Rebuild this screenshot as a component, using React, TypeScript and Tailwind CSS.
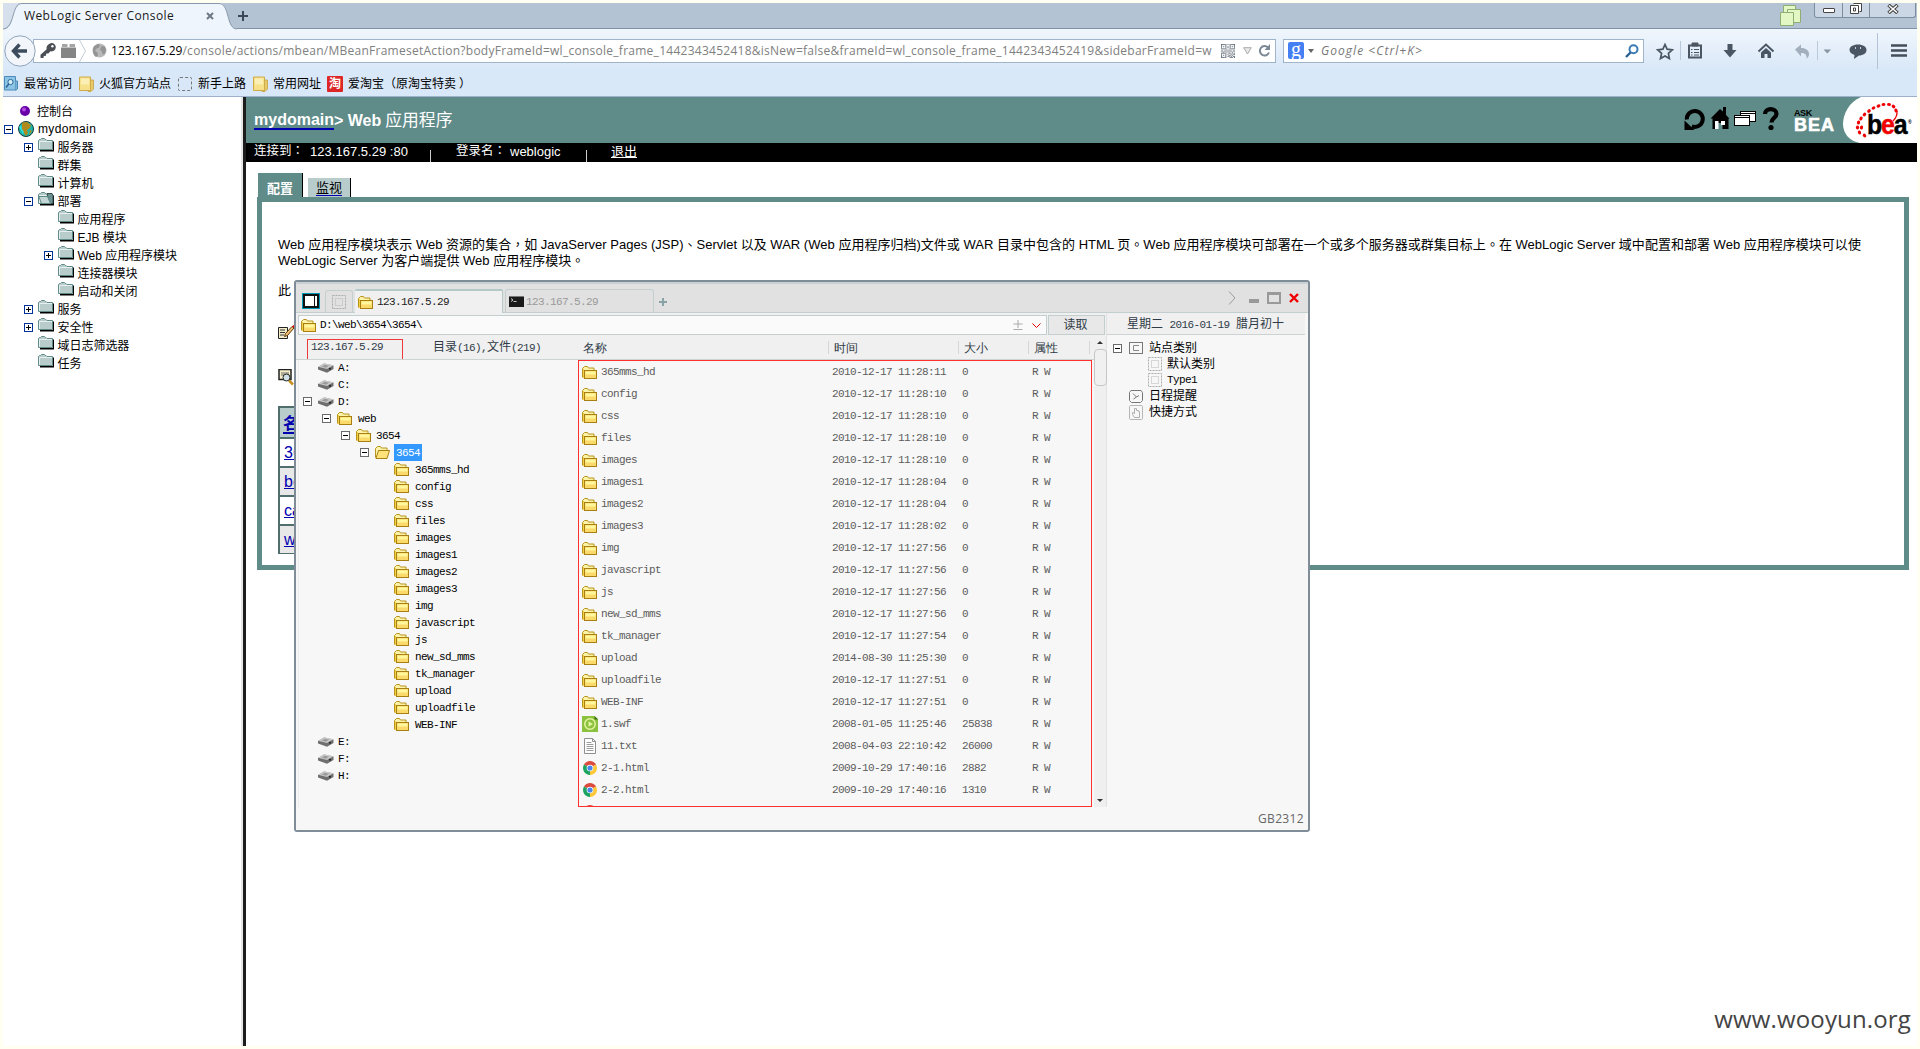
import React from "react";

const SONG = "font-['Liberation_Mono','Noto_Sans_CJK_SC',monospace]";

/* ---------- browser icons ---------- */

function BackIcon() {
  return (
    <svg width="32" height="32" viewBox="0 0 32 32" className="relative z-10 -mr-[3px] shrink-0">
      <circle cx="16" cy="16" r="15.2" fill="#f2f6fb" stroke="#8fa3bb" />
      <path d="M15.5 9.5 9.5 16l6 6.5M10 16h13" fill="none" stroke="#3d4c5c" strokeWidth="3.4" />
    </svg>
  );
}

function KeyIcon() {
  return (
    <svg width="17" height="17" viewBox="0 0 17 17" className="shrink-0">
      <path d="M10.6 1.2c2-1 5.2.8 5.2 3.8 0 3-2.600 5-5.400 4.300L8.300 11.500 6.200 11.600 6 13.700 3.800 13.900 3.500 16H.5v-3.200l6.200-5.600C6 4.600 8 2 10.600 1.200z" fill="#4b4f55" />
      <circle cx="12.400" cy="4.300" r="1.200" fill="#fff" />
    </svg>
  );
}

function BrickIcon() {
  return (
    <svg width="15" height="14" viewBox="0 0 15 14" className="shrink-0">
      <path d="M1 0h5.500v3H1zM8.500 0H14v3H8.500z" fill="#a5a5a5" />
      <path d="M0 3.500h15V14H0z" fill="#858585" />
    </svg>
  );
}

function GreyGlobe() {
  return (
    <svg width="15" height="15" viewBox="0 0 15 15" className="shrink-0">
      <circle cx="7.500" cy="7.500" r="7" fill="#b9b9b9" />
      <path d="M2 3.500 6 1l2 1-1 2.500-3 1.500-1 2 2.500 1.500.5 3-2 1.500C1 12 0 7 2 3.500zM9.500 3l3 .5 1.500 3-1 4-2.500 1-.5-3-2-1.500z" fill="#949494" />
    </svg>
  );
}

const QR = [
  "1111101011111",
  "1000100010001",
  "1010101010101",
  "1000101010001",
  "1111100011111",
  "0000010100000",
  "1101101011011",
  "0010010100100",
  "1111100110101",
  "1000101001011",
  "1010100110100",
  "1000101101011",
  "1111100011101",
];

function QrIcon() {
  return (
    <svg width="14" height="14" viewBox="0 0 13 13" className="shrink-0">
      {QR.map((row, y) =>
        row.split("").map((c, x) => (c === "1" ? <rect key={`${x}-${y}`} x={x} y={y} width="1" height="1" fill="#6d7681" /> : null)),
      )}
    </svg>
  );
}

function BookmarkFolder() {
  return (
    <svg width="15" height="16" viewBox="0 0 15 16" className="shrink-0">
      <path d="M9 4h5.500v9L12 15.500H9z" fill="#e8c968" stroke="#c9a040" strokeWidth=".8" />
      <path d="M.5 1h11v13.500H.5z" fill="#f6e08a" stroke="#cfaa48" />
      <path d="M2 2.500h8v6H2z" fill="#fbefb5" />
    </svg>
  );
}

/* ---------- WebLogic tree ---------- */

/* Punctuation centred in its full-width cell */
function Mark({ children }: { children: string }) {
  return <span className="font-['Noto_Sans_CJK_TC',sans-serif] leading-none" lang="zh-Hant">{children}</span>;
}

function WlFolder({ open = false }: { open?: boolean }) {
  return (
    <svg width="16" height="14" viewBox="0 0 16 14" className="shrink-0">
      <path d="M2 13.500h14V4l-1-1v9H2z" fill="#000" />
      <path d="M.5 11.500v-9l1-1h1l1-1h3l1 1H8l1 1h5.500v9z" fill="#b8cccc" stroke="#5f8b89" />
      <path d="M1.500 11V3.500H14" fill="none" stroke="#e6f0f0" />
      {open && (
        <>
          <path d="M9 1.500h5l1 2v8h-4z" fill="#6c9190" stroke="#33504e" />
          <path d="M3.500 11.500.8 4.500h8.700l3 7z" fill="#c4d5d5" stroke="#5f8b89" />
        </>
      )}
    </svg>
  );
}

function Box({ plus = false, grey = false }: { plus?: boolean; grey?: boolean }) {
  return (
    <svg width="9" height="9" viewBox="0 0 9 9" className="shrink-0">
      <rect x=".5" y=".5" width="8" height="8" fill="#fff" stroke={grey ? "#6a6a6a" : "#003399"} />
      <path d="M2 4.500h5" stroke="#000" />
      {plus && <path d="M4.500 2v5" stroke="#000" />}
    </svg>
  );
}

type Node = { label: React.ReactNode; depth: number; box?: "plus" | "minus"; open?: boolean };

const NAV: Node[] = [
  { label: "服务器", depth: 1, box: "plus" },
  { label: "群集", depth: 1 },
  { label: "计算机", depth: 1 },
  { label: "部署", depth: 1, box: "minus", open: true },
  { label: "应用程序", depth: 2 },
  { label: "EJB 模块", depth: 2 },
  { label: "Web 应用程序模块", depth: 2, box: "plus" },
  { label: "连接器模块", depth: 2 },
  { label: "启动和关闭", depth: 2 },
  { label: "服务", depth: 1, box: "plus" },
  { label: "安全性", depth: 1, box: "plus" },
  { label: "域日志筛选器", depth: 1 },
  { label: "任务", depth: 1 },
];

function Sidebar() {
  return (
    <nav className="w-[238px] shrink-0 bg-white pt-[5px] text-[12px] text-black">
      <div className="flex h-[18px] items-center pl-[17px]">
        <svg width="10" height="10" viewBox="0 0 10 10">
          <circle cx="5" cy="5" r="5" fill="#6a00a8" />
          <circle cx="4" cy="3.500" r="2" fill="#b04be0" />
        </svg>
        <span className="pl-[7px] pt-px">控制台</span>
      </div>
      <div className="flex h-[18px] items-center pl-px">
        <Box />
        <svg width="16" height="16" viewBox="0 0 16 16" className="ml-[5px]">
          <circle cx="8" cy="8" r="7.500" fill="#1fb5a8" stroke="#0c3b38" />
          <path d="M4 1.500 9 1l4 3-1 3-3 2 1 3-2 3-2-3-3-3 1-3z" fill="#b08a1c" />
          <path d="M1 6l2-2 1 4 2 3-1 2z" fill="#2ce0e0" />
          <path d="M12 9l2 1-3 4z" fill="#b08a1c" />
        </svg>
        <span className="pl-[4px] tracking-[0.35px]">mydomain</span>
      </div>
      {NAV.map((n, i) => (
        <div key={i} className={`flex h-[18px] items-center ${n.depth === 1 ? "pl-[21px]" : "pl-[41px]"}`}>
          <span className="flex w-[14px] items-center">{n.box && <Box plus={n.box === "plus"} />}</span>
          <span className="-mt-[4px] flex">
            <WlFolder open={n.open} />
          </span>
          <span className="whitespace-nowrap pl-[3.500px] pt-[2px] tracking-[-0.03px]">{n.label}</span>
        </div>
      ))}
    </nav>
  );
}

/* ---------- file manager icons ---------- */

function Folder({ open = false }: { open?: boolean }) {
  return (
    <svg width="15" height="13" viewBox="0 0 15 13" className="shrink-0">
      <path d="M.5 11.500V2.500L2.500.5h3l1 1.500h5.500v3" fill="#fdf3a8" stroke="#b8941c" />
      {open ? (
        <path d="M1 12.200 3.500 4.500h11L12 12.500H1z" fill="#ffe37a" stroke="#a87f12" />
      ) : (
        <>
          <path d="M1 3h1v9H1z" fill="#f3cf45" />
          <rect x="2.500" y="4.500" width="12" height="8" fill="#fbd96a" stroke="#a87f12" />
          <path d="M3.500 5.500h10v3h-10z" fill="#fff79c" />
        </>
      )}
    </svg>
  );
}

function Drive() {
  return (
    <svg width="16" height="10" viewBox="0 0 16 10" className="shrink-0">
      <path d="M0 4 6 .5 15.500 2.500V6L9 9.800 0 6.500z" fill="#6f6f6f" />
      <path d="M0 3.700 6.200.3l9.300 2L9 6z" fill="#c9c9c9" />
      <path d="M3.500 3.500 7 1.800l4 1L8 4.700z" fill="#9b9b9b" />
      <circle cx="12" cy="5.700" r="1" fill="#222" />
    </svg>
  );
}

function Swf() {
  return (
    <svg width="16" height="16" viewBox="0 0 16 16" className="shrink-0">
      <path d="M0 0h12.500L16 3v13H0z" fill="#8cc13f" />
      <path d="M12.500 0 16 3.500h-3.500z" fill="#3c6d12" />
      <circle cx="8" cy="8" r="5.200" fill="none" stroke="#e4f5a0" strokeWidth="1.500" />
      <path d="M6.500 5.200 11 8l-4.500 2.800z" fill="#e4f5a0" />
    </svg>
  );
}

function Txt() {
  return (
    <svg width="12" height="16" viewBox="0 0 12 16" className="mx-[2px] shrink-0">
      <path d="M.5.5h8l3 3v12H.5z" fill="#fff" stroke="#8f8f8f" />
      <path d="M8.500.5v3h3" fill="none" stroke="#8f8f8f" />
      <path d="M2.500 4.500h5M2.500 6.500h7M2.500 8.500h7M2.500 10.500h7M2.500 12.500h7" stroke="#9b9b9b" />
    </svg>
  );
}

function Chrome() {
  return (
    <svg width="14" height="14" viewBox="0 0 14 14" className="mx-px shrink-0">
      <path d="M7 7 .94 3.500A7 7 0 0 1 13.060 3.500z" fill="#dd4b3e" />
      <path d="M7 7 .94 3.500A7 7 0 0 0 7 14z" fill="#1da462" />
      <path d="M7 7 13.060 3.500A7 7 0 0 1 7 14z" fill="#fdc93b" />
      <circle cx="7" cy="7" r="3.300" fill="#fff" />
      <circle cx="7" cy="7" r="2.600" fill="#4a86ee" />
    </svg>
  );
}

function DottedBox() {
  return (
    <svg width="14" height="14" viewBox="0 0 14 14" className="shrink-0" fill="none" stroke="#acacac">
      <rect x=".5" y=".5" width="13" height="13" strokeDasharray="2 1" />
      <rect x="3.500" y="3.500" width="7" height="7" stroke="#b4b4b4" strokeDasharray="1 1" />
    </svg>
  );
}

/* ---------- file manager data ---------- */

const DIRS = ["365mms_hd", "config", "css", "files", "images", "images1", "images2", "images3", "img", "javascript", "js", "new_sd_mms", "tk_manager", "upload", "uploadfile", "WEB-INF"];

const TIMES = ["28:11", "28:10", "28:10", "28:10", "28:10", "28:04", "28:04", "28:02", "27:56", "27:56", "27:56", "27:56", "27:54", "", "27:51", "27:51"];

type Row = { name: string; time: string; size: string; icon: React.ReactNode };

const ROWS: Row[] = [
  ...DIRS.map((name, i) => ({
    name,
    time: name === "upload" ? "2014-08-30 11:25:30" : `2010-12-17 11:${TIMES[i]}`,
    size: "0",
    icon: <Folder />,
  })),
  { name: "1.swf", time: "2008-01-05 11:25:46", size: "25838", icon: <Swf /> },
  { name: "11.txt", time: "2008-04-03 22:10:42", size: "26000", icon: <Txt /> },
  { name: "2-1.html", time: "2009-10-29 17:40:16", size: "2882", icon: <Chrome /> },
  { name: "2-2.html", time: "2009-10-29 17:40:16", size: "1310", icon: <Chrome /> },
];

function DriveRow({ name, box = false }: { name: string; box?: boolean }) {
  return (
    <div className="flex h-[17px] items-center pl-[4px]">
      <span className="w-[15px]">{box && <Box grey />}</span>
      <Drive />
      <span className="pl-[4px] pt-px">{name}</span>
    </div>
  );
}

function DirTree() {
  return (
    <div className="h-[448px] w-[280px] shrink-0 border-l border-[#ececec] text-[11px] tracking-[-0.6px] text-black">
      <DriveRow name="A:" />
      <DriveRow name="C:" />
      <DriveRow name="D:" box />
      <div className="flex h-[17px] items-center pl-[23px]">
        <Box grey />
        <span className="flex pl-[6px] pr-[6px]"><Folder /></span>
        <span className="pt-px">web</span>
      </div>
      <div className="flex h-[17px] items-center pl-[42px]">
        <Box grey />
        <span className="flex pl-[6px] pr-[5px]"><Folder /></span>
        <span className="pt-px">3654</span>
      </div>
      <div className="flex h-[17px] items-center pl-[61px]">
        <Box grey />
        <span className="flex pl-[6px] pr-[4px]"><Folder open /></span>
        <span className="flex h-[17px] w-[28px] items-center bg-[#3399ff] pl-[2px] pt-px text-white">3654</span>
      </div>
      {DIRS.map((d) => (
        <div key={d} className="flex h-[17px] items-center pl-[95px]">
          <Folder />
          <span className="pl-[6px] pt-px">{d}</span>
        </div>
      ))}
      <DriveRow name="E:" />
      <DriveRow name="F:" />
      <DriveRow name="H:" />
    </div>
  );
}

function HeadCell({ children, className }: { children: React.ReactNode; className: string }) {
  return <span className={`h-[13px] shrink-0 border-r border-[#d3d7d7] font-sans leading-[13px] ${className}`}>{children}</span>;
}

function FileManager() {
  return (
    <div className={`absolute left-[294px] top-[280px] flex h-[552px] w-[1016px] flex-col rounded-[3px] border-2 border-[#808c97] bg-[#f7f7f7] ${SONG}`}>
      {/* title bar with tabs */}
      <div className="flex h-[31px] shrink-0 items-end border-b border-t-2 border-b-[#c3cfcf] border-t-[#c8d2d4] bg-[#e1e1e1] pl-[6px] text-[11px] tracking-[-0.6px]">
        <svg width="18" height="16" viewBox="0 0 18 16" className="mb-[3px]">
          <rect x=".5" y=".5" width="17" height="15" fill="#111" stroke="#0097b8" />
          <rect x="3" y="3" width="9" height="10" fill="#fff" />
          <rect x="13" y="3" width="2" height="10" fill="#fff" />
        </svg>
        <div className="ml-[5px] flex h-[22px] w-[28px] items-center justify-center rounded-t-[3px] border border-b-0 border-[#c3cfcf]">
          <DottedBox />
        </div>
        <div className="-mb-px ml-[2px] flex h-[24px] w-[148px] items-center rounded-t-[2px] border-r border-t-2 border-[#b4c8c8] bg-[#f0f0f0] pl-[3px] text-[#222]">
          <Folder />
          <span className="pl-[4px]">123.167.5.29</span>
        </div>
        <div className="ml-[2px] flex h-[23px] w-[149px] items-center rounded-t-[3px] border border-b-0 border-[#c3cfcf] pl-[3px] text-[#999]">
          <svg width="15" height="11" viewBox="0 0 15 11">
            <rect width="15" height="11" fill="#1a1a1a" />
            <path d="M0 0h15v1H0z" fill="#777" />
            <path d="M2 2.500 4 4 2 5.500M4.500 5.500h3" fill="none" stroke="#ddd" strokeWidth=".9" />
          </svg>
          <span className="pl-[2px] pt-[2px]">123.167.5.29</span>
        </div>
        <svg width="8" height="8" viewBox="0 0 8 8" className="mb-[6px] ml-[5px]">
          <path d="M4 0v8M0 4h8" stroke="#87a3a6" strokeWidth="2" />
        </svg>
        <div className="mb-[7px] ml-auto flex items-center pr-[9px]">
          <svg width="8" height="14" viewBox="0 0 8 14"><path d="M1 .5 7 7l-6 6.500" fill="none" stroke="#9a9a9a" /></svg>
          <span className="ml-[13px] mt-[5px] h-[4px] w-[10px] bg-[#999]" />
          <span className="ml-[8px] h-[12px] w-[14px] border-2 border-t-[3px] border-[#999]" />
          <svg width="10" height="10" viewBox="0 0 10 10" className="ml-[8px]"><path d="m1 1 8 8M9 1 1 9" stroke="#f00000" strokeWidth="2.400" /></svg>
        </div>
      </div>
      <div className="flex min-h-0 flex-1">
        <div className="flex w-[811px] shrink-0 flex-col bg-[#f0f0f0]">
          {/* address line */}
          <div className="flex shrink-0 pl-[2px] pt-[2px]">
            <div className="flex h-[20px] w-[749px] items-center border border-[#c3cfcf] bg-[#fafafa] pl-[2px] text-[11px] tracking-[-0.6px] text-black">
              <Folder />
              <span className="pl-[4px] pt-px">D:\web\3654\3654\</span>
              <svg width="10" height="10" viewBox="0 0 10 10" className="ml-auto"><path d="M5 0v8M.5 4h9M.5 9.500h9" stroke="#aaa" fill="none" /></svg>
              <svg width="9" height="6" viewBox="0 0 9 6" className="ml-[9px] mr-[5px] mt-[2px]"><path d="m.5.5 4 4 4-4" fill="none" stroke="#e00000" /></svg>
            </div>
            <div className="ml-px flex h-[20px] w-[57px] items-center justify-center border border-[#c3cfcf] bg-[#e8e8e8] pr-[2px] pt-px text-[12px] text-[#2f3b47]">读取</div>
          </div>
          {/* column headings */}
          <div className="flex h-[24px] shrink-0 items-center text-[12px] text-[#2f3b47]">
            <span className="ml-[11px] mt-[4px] flex h-[21px] w-[96px] items-center border border-[#f03a3a] pb-[3px] pl-[3px] text-[11px] tracking-[-0.6px]">123.167.5.29</span>
            <span className="ml-[30px] w-[150px] shrink-0 pt-[2px] text-[12px]">
              目录<span className="text-[11px] tracking-[-0.6px]">(16),</span>文件<span className="text-[11px] tracking-[-0.6px]">(219)</span>
            </span>
            <HeadCell className="w-[246px]">名称</HeadCell>
            <HeadCell className="w-[130px] pl-[5px]">时间</HeadCell>
            <HeadCell className="w-[70px] pl-[5px]">大小</HeadCell>
            <HeadCell className="w-[61px] pl-[5px]">属性</HeadCell>
          </div>
          <div className="relative flex min-h-0 flex-1 bg-[#f7f7f7] pl-[2px]">
            <div className="absolute left-0 top-0 h-px w-[799px] bg-[#cdd3d3]" />
            <DirTree />
            <div className="mt-px h-[447px] w-[514px] overflow-hidden border border-[#ff3030] text-[11px] tracking-[-0.6px] text-[#5c5c5c]">
              {ROWS.map((r) => (
                <div key={r.name} className="flex h-[22px] items-center pl-[3px]">
                  <span className="flex w-[19px]">{r.icon}</span>
                  <span className="w-[231px] pt-px">{r.name}</span>
                  <span className="w-[130px] pt-px">{r.time}</span>
                  <span className="w-[70px] pt-px">{r.size}</span>
                  <span className="pt-px">R W</span>
                </div>
              ))}
              <div className="flex h-[22px] items-start pl-[3px] pt-[4px]"><Chrome /></div>
            </div>
          </div>
        </div>
        {/* scrollbar */}
        <div className="z-10 -ml-[13px] flex h-[494px] w-[13px] shrink-0 flex-col items-center border-r border-[#e2e2e2] pt-[28px]">
          <span className="h-0 w-0 border-x-[3px] border-b-[3px] border-x-transparent border-b-[#333]" />
          <span className="mt-[5px] h-[37px] w-[13px] shrink-0 rounded-[4px] border border-[#c6c6c6] bg-[#f0f0f0]" />
          <span className="w-full flex-1 bg-[#efefef]" />
          <span className="flex h-[10px] w-full shrink-0 justify-center bg-[#efefef] pt-[2px]"><span className="h-0 w-0 border-x-[3px] border-t-[3px] border-x-transparent border-t-[#333]" /></span>
        </div>
        {/* calendar and site categories */}
        <div className="flex flex-1 flex-col text-[12px] text-black">
          <div className="mr-[3px] flex h-[22px] shrink-0 items-center border-b border-[#cdd3d3] bg-[#f0f0f0] pl-[20px] pt-[3px] text-[#2f3b47]">
            星期二<span className="px-[6.500px] text-[11px] tracking-[-0.6px]">2016-01-19</span>腊月初十
          </div>
          <div className="mt-[5px] flex h-[16px] items-center pl-[6px]">
            <Box grey />
            <svg width="14" height="12" viewBox="0 0 14 12" className="ml-[7px] mr-[6px]">
              <rect x=".5" y=".5" width="13" height="11" fill="none" stroke="#777" />
              <path d="M10 3.500H4.500v5H10" fill="none" stroke="#888" />
            </svg>
            <span className="pt-px">站点类别</span>
          </div>
          <div className="flex h-[16px] items-center gap-[5px] pl-[41px]"><DottedBox /><span className="pt-px">默认类别</span></div>
          <div className="flex h-[16px] items-center gap-[5px] pl-[41px]"><DottedBox /><span className="pt-px text-[11px] tracking-[-0.6px]">Type1</span></div>
          <div className="flex h-[16px] items-center gap-[6px] pl-[22px]">
            <svg width="14" height="13" viewBox="0 0 14 13"><path d="M2 .5h10l1.500 2v8l-2 2h-9l-2-2v-8z" fill="none" stroke="#777" /><path d="M4 3.500 7.500 7 4.500 9M7.500 7 10 5.500" fill="none" stroke="#777" /></svg>
            <span className="pt-px">日程提醒</span>
          </div>
          <div className="flex h-[16px] items-center gap-[6px] pl-[22px]">
            <svg width="14" height="15" viewBox="0 0 14 15"><rect x=".5" y=".5" width="13" height="14" rx="1" fill="none" stroke="#b5b5b5" /><path d="M5.500 3.500v5L3.500 7.500v2l2 3h5v-6h-1v-1h-2v-2z" fill="none" stroke="#b0b0b0" /></svg>
            <span className="pt-px">快捷方式</span>
          </div>
          <div className="ml-auto mt-auto pb-[2px] pr-[4px] font-['Open_Sans',sans-serif] text-[12px] tracking-[0.35px] text-[#666]">GB2312</div>
        </div>
      </div>
    </div>
  );
}

/* ---------- browser chrome ---------- */

function TabStrip() {
  return (
    <div className="flex h-[26px] shrink-0 bg-[#b4c3d4]">
      <div className="relative h-[27px] w-[234px] shrink-0">
        <svg width="234" height="27" viewBox="0 0 234 27" className="absolute inset-0">
          <path d="M0 0h16C10 4 12 22 0 26z" fill="#d6e0ec" />
          <path d="M0 27v-1C12 26 8 0 19 0h197c11 0 7 26 18 26v1z" fill="#eff5fc" />
          <path d="M0 26C12 26 8 .5 19 .5h197c11 0 7 25.500 18 25.500" fill="none" stroke="#8698ab" />
        </svg>
        <div className="relative flex h-[26px] items-center pl-[21px] text-[12px] tracking-[0.4px] text-[#1a1a1a]">
          <span className="w-[182px] whitespace-nowrap">WebLogic Server Console</span>
          <svg width="8" height="8" viewBox="0 0 8 8"><path d="m1 1 6 6M7 1 1 7" stroke="#6d7885" strokeWidth="2" /></svg>
        </div>
      </div>
      <div className="flex flex-1 items-start border-b border-[#7f92a6]">
        <svg width="10" height="10" viewBox="0 0 10 10" className="ml-px mt-[8px]"><path d="M5 0v10M0 5h10" stroke="#3c4855" strokeWidth="2" /></svg>
        <svg width="21" height="21" viewBox="0 0 21 21" className="ml-auto mr-[13px] mt-[2px]" fill="#e2f7c4" stroke="#8fae74">
          <path d="M3.500.5h12v14h-12z" />
          <path d="M7.500 4.500h13v13h-13z" />
          <path d="M.5 7.500h13v13H.5z" />
        </svg>
        <div className="mr-px flex h-[15px] rounded-b-[3px] border border-t-0 border-[#7c8da0] bg-[#cbd7e4] pb-[2px]">
          <span className="-mb-[2px] flex w-[28px] items-center justify-center border-r border-[#7c8da0]"><span className="mt-px h-[5px] w-[12px] rounded-[1px] border border-[#444] bg-white" /></span>
          <span className="-mb-[2px] flex w-[27px] items-center justify-center border-r border-[#7c8da0] pb-[4px]">
            <svg width="12" height="11" viewBox="0 0 12 11"><path d="M3.500.5h8v8h-2M.5 2.500h8v8h-8z" fill="#fff" stroke="#444" /><path d="M3.500 5h2v3h-2z" fill="#fff" stroke="#444" /></svg>
          </span>
          <span className="flex w-[45px] items-center justify-center">
            <svg width="12" height="10" viewBox="0 0 12 10"><path d="m1.500 1 9 8M10.500 1l-9 8" stroke="#444" strokeWidth="3.600" /><path d="m2 1.500 8 7M10 1.500l-8 7" stroke="#fff" strokeWidth="1.600" /></svg>
          </span>
        </div>
      </div>
    </div>
  );
}

function ToolbarIcons() {
  return (
    <svg width="270" height="36" viewBox="1647 32 270 36" fill="none" stroke="#4a5663" className="ml-[3px] shrink-0">
      <path d="m1665 43.500 2.100 4.700 5.200.6-3.900 3.500 1 5.200-4.400-2.600-4.500 2.600 1.100-5.200-3.900-3.500 5.200-.6z" strokeWidth="1.700" />
      <path d="M1680.500 40v19M1817.500 40v19" stroke="#b9c9da" />
      <path d="M1689 44.500h12v12h-12z" strokeWidth="2" /><path d="M1692 42h6v3h-6z" fill="#4a5663" />
      <path d="M1691 48.500h1.500M1694 48.500h5M1691 51.500h1.500M1694 51.500h5M1691 54h1.500M1694 54h5" />
      <path d="M1727.500 43h5v6h4l-6.500 7.500-6.500-7.500h4z" fill="#4a5663" stroke="none" />
      <path d="m1758.500 50.500 7.500-7 7.500 7" strokeWidth="2" /><path d="m1761 51.500 5-4.500 5 4.500v5.500h-3.500v-4h-3v4h-3.500z" fill="#4a5663" stroke="none" />
      <path d="m1795 48.500 6-5v3.500c5 0 8 2.500 8 6 0 2-1 3.500-2.500 4.500 .5-4-1.500-5.500-5.500-5.500v3.500z" fill="#a3afbd" stroke="none" />
      <path d="M1823.500 48.500h7.500l-3.700 4z" fill="#8a95a3" stroke="none" />
      <path d="M1858 43.500c5 0 8.500 2.300 8.500 5.500s-3.300 5.500-7.500 5.500l-5 3.500 .5-4c-3-1-5-2.700-5-5 0-3.200 3.500-5.500 8.500-5.500z" fill="#4a5663" stroke="none" />
      <path d="M1855.500 46v2M1860.500 46v2" stroke="#c6d2df" />
      <path d="M1877.500 32v36" stroke="#b3c3d6" />
      <path d="M1891 44.500h16M1891 49.500h16M1891 54.500h16" stroke="#434e5a" strokeWidth="2.600" />
    </svg>
  );
}

function NavBar() {
  return (
    <div className="flex h-[41px] shrink-0 items-center pl-px pt-[2px]">
      <BackIcon />
      <div className="flex h-[24px] w-[1243px] shrink-0 items-center border border-[#9fb3c9] bg-white pl-[6px]">
        <KeyIcon />
        <span className="w-[4px] shrink-0" />
        <BrickIcon />
        <svg width="8" height="22" viewBox="0 0 8 22" className="ml-[3px] mr-[5px] shrink-0"><path d="m.5 0 6 11-6 11" fill="none" stroke="#c3ccd6" /></svg>
        <GreyGlobe />
        <span className="w-[1109px] shrink-0 whitespace-nowrap pl-[4px] text-[12px] tracking-[0.265px] text-[#808080]">
          <span className="tracking-[0.02px] text-black">123.167.5.29</span>
          /console/actions/mbean/MBeanFramesetAction?bodyFrameId=wl_console_frame_1442343452418&amp;isNew=false&amp;frameId=wl_console_frame_1442343452419&amp;sidebarFrameId=w
        </span>
        <span className="ml-auto" />
        <QrIcon />
        <svg width="9" height="8" viewBox="0 0 9 8" className="ml-[8px] shrink-0"><path d="M.7.700h7.600L4.500 7z" fill="#e8e8e8" stroke="#aaa" /></svg>
        <svg width="13" height="13" viewBox="0 0 13 13" className="ml-[6px] mr-[4px] shrink-0"><path d="M10 3.500A4.700 4.700 0 1 0 11 8.500" fill="none" stroke="#7d8896" strokeWidth="2" /><path d="M12 0v6H6.500z" fill="#7d8896" /></svg>
      </div>
      <div className="ml-[7px] flex h-[24px] w-[361px] shrink-0 items-center border border-[#9fb3c9] bg-white pl-[4px]">
        <span className="flex h-[17px] w-[16px] items-center justify-center rounded-[2px] bg-[#4480f4] pb-[4px] font-['Liberation_Serif',serif] text-[20px] leading-none text-white">g</span>
        <span className="ml-[4px] h-0 w-0 border-x-[3px] border-t-[4px] border-x-transparent border-t-[#666]" />
        <span className="pl-[7px] text-[12px] italic tracking-[1.05px] text-[#777]">Google &lt;Ctrl+K&gt;</span>
        <svg width="14" height="14" viewBox="0 0 14 14" className="ml-auto mr-[4px]"><circle cx="8.500" cy="5.300" r="4" fill="none" stroke="#3b7ab5" strokeWidth="2" /><path d="m5.500 8.500-4.500 4.500" stroke="#2b6193" strokeWidth="2.400" /></svg>
      </div>
      <ToolbarIcons />
    </div>
  );
}

function Bookmarks() {
  return (
    <div className="flex h-[27px] shrink-0 items-center whitespace-nowrap border-b border-[#9eb0cc] pl-px pt-px text-[12px] text-black">
      <svg width="14" height="15" viewBox="0 0 14 15">
        <path d="M.5.5h11v13.500H.5z" fill="#8cc4e6" stroke="#4c8ab8" /><path d="M11.500 5h2v8l-2 1.500" fill="#79b2d8" stroke="#4c8ab8" />
        <circle cx="6.500" cy="6" r="2.600" fill="#d8effa" stroke="#2b6797" /><path d="M4.700 8 2 11.500" stroke="#2b6797" strokeWidth="1.500" />
      </svg>
      <span className="ml-[6px] w-[55px]">最常访问</span>
      <BookmarkFolder />
      <span className="ml-[5px] w-[79px]">火狐官方站点</span>
      <span className="h-[14px] w-[14px] rounded-[2px] border border-dashed border-[#777]" />
      <span className="ml-[6px] w-[55px]">新手上路</span>
      <BookmarkFolder />
      <span className="ml-[5px] w-[54px]">常用网址</span>
      <span className="flex h-[16px] w-[16px] items-center justify-center rounded-[1px] bg-[#dd2727] text-[12px] font-bold leading-none text-white">淘</span>
      <span className="ml-[5px]">爱淘宝<Mark>（</Mark>原淘宝特卖<span className="pl-[3px]">）</span></span>
    </div>
  );
}

/* ---------- WebLogic header ---------- */

function HeaderIcons() {
  return (
    <div className="flex h-full items-center">
      <svg width="96" height="26" viewBox="1682 106 96 26" className="mb-[3px]">
        <path d="M1685.800 119.500a8 8 0 1 1 5 6.900" fill="none" stroke="#000" strokeWidth="4" />
        <path d="M1683.500 120.500v9.500h10z" />
        <path d="M1719 109 1709.500 118.500h2v10.500h5v-6h5v6h6V118.500h1L1725 115v-8h-3v4.500z" />
        <path d="M1714 121h3.500v8h-3.500zM1720 121h4v4h-4z" fill="#fff" />
        <rect x="1739.500" y="111.500" width="15" height="10" fill="#fff" stroke="#000" /><path d="M1739 113.500h16" stroke="#000" />
        <rect x="1733.500" y="115.500" width="15" height="10" fill="#fff" stroke="#000" /><path d="M1733 117.500h16" stroke="#000" />
        <path d="M1764 114c0-6.500 11.500-6.500 11.500 0 0 4-5 4-5 8.500" fill="none" stroke="#000" strokeWidth="4.200" />
        <circle cx="1770" cy="127.500" r="2.600" />
      </svg>
      <div className="ml-[15px] mt-px flex w-[42px] flex-col font-['Liberation_Sans',Arial,sans-serif]">
        <span className="text-[9px] font-bold leading-[8px] tracking-[-0.4px] text-black">ASK</span>
        <span className="text-[18px] font-bold leading-[16px] tracking-[1px] text-white [-webkit-text-stroke:0.6px_white]">BEA</span>
      </div>
    </div>
  );
}

const BEADS = [
  [1864.5, 135.5, -40], [1859.5, 132.5, -20], [1861.5, 127.5, 15], [1857.5, 127.5, 0], [1858.5, 122.5, 15], [1861, 118.5, 30], [1864.5, 114.5, 42], [1869, 111, 50], [1873.5, 108, 58], [1878.5, 106, 70], [1883.5, 104.5, 85], [1889, 104.5, 95], [1893.5, 106.5, 130], [1896, 110.5, 165],
];

function BeaLogo() {
  return (
    <div className="relative ml-[6px] h-[46px] w-[75px]">
      <svg width="75" height="46" viewBox="1842 97 75 46" className="absolute inset-0">
        <path d="M1917 97h-56c-12 5-18 17-18 27 0 9 6 17 17 19h57z" fill="#fff" />
        {BEADS.map(([x, y, r], i) => (
          <ellipse key={i} cx={x} cy={y} rx="1.600" ry="2" fill="#f00000" transform={`rotate(${r} ${x} ${y})`} />
        ))}
        <path d="M1897 111c.5 4-1 7-4 10" fill="none" stroke="#f00000" strokeWidth="1.200" />
      </svg>
      <span className="absolute left-[25px] top-[14px] origin-left scale-x-[0.92] font-['Liberation_Sans',Arial,sans-serif] text-[27px] font-bold leading-[28px] tracking-[-1.2px] text-black [-webkit-text-stroke:0.5px_currentColor]">
        b<span className="text-[#f00000]">e</span>a
      </span>
      <span className="absolute left-[66px] top-[22px] text-[5px] leading-[6px] text-black">®</span>
    </div>
  );
}

function Main() {
  return (
    <main className="flex min-w-0 flex-1 flex-col border-l-[3px] border-[#1c1c1c] bg-white font-['Liberation_Sans','Noto_Sans_CJK_SC',sans-serif] text-[13px] text-black">
      <div className="flex h-[46px] shrink-0 items-center bg-[#5f8b89] pl-[8px] text-[16px] font-bold text-white">
        <span className="mt-[2px] border-b-2 border-[#0000b0] leading-[16px]">mydomain</span>
        <span className="mt-px">&gt; Web</span>
        <span className="mt-px pl-[4px] text-[16.800px] font-normal">应用程序</span>
        <span className="ml-auto" />
        <HeaderIcons />
        <BeaLogo />
      </div>
      <div className="flex h-[19px] shrink-0 items-center bg-black pb-[2px] pl-[8px] text-white">
        <span className="w-[56px] text-[12.500px]">连接到<Mark>：</Mark></span>
        <span className="w-[120px] tracking-[0.02px]">123.167.5.29 :80</span>
        <span className="mt-[9px] h-[12px] w-px bg-[#ccc]" />
        <span className="ml-[25px] w-[54px] text-[12.500px]">登录名<Mark>：</Mark></span>
        <span className="w-[76px]">weblogic</span>
        <span className="mt-[9px] h-[12px] w-px bg-[#ccc]" />
        <span className="ml-[24px] underline">退出</span>
      </div>
      <div className="flex h-[35px] shrink-0 items-end pl-[12px]">
        <span className="flex h-[24px] w-[45px] items-center justify-center border-r border-black bg-[#5f8b89] pt-[7px] font-bold text-white">配置</span>
        <span className="ml-[5px] flex h-[19px] w-[43px] items-center justify-center border-r border-black bg-[#b8cccc]"><span className="mt-px border-b border-[#0000b0] leading-[15px]">监视</span></span>
      </div>
      <section className="ml-[11px] mr-[8px] h-[373px] shrink-0 border-[5px] border-[#5f8b89] pl-[16px] pt-[35px]">
        <p className="h-[32px] whitespace-nowrap leading-[16px] tracking-[0.015px]">
          Web 应用程序模块表示 Web 资源的集合<Mark>，</Mark>如 JavaServer Pages (JSP)<Mark>、</Mark>Servlet 以及 WAR (Web 应用程序归档)文件或 WAR 目录中包含的 HTML 页<Mark>。</Mark>Web 应用程序模块可部署在一个或多个服务器或群集目标上<Mark>。</Mark>在 WebLogic Server 域中配置和部署 Web 应用程序模块可以使
          <br />
          WebLogic Server 为客户端提供 Web 应用程序模块<Mark>。</Mark>
        </p>
        <p className="mt-[14px] leading-[16px]">此</p>
        <svg width="17" height="14" viewBox="0 0 17 14" className="mt-[26px]">
          <path d="M.5 2.500h9v11h-9z" fill="#f4edc9" stroke="#222" /><path d="M2 5h5M2 7.500h5M2 10h4" stroke="#333" />
          <path d="m6.500 11.500 1-3L14 1.500l2 1.500-6.500 7.500z" fill="#f0c070" stroke="#5a3a10" /><path d="m14 1.500 1.500-1.500L17 2l-1 1z" fill="#e00000" />
        </svg>
        <svg width="17" height="17" viewBox="0 0 17 17" className="mt-[30px]">
          <path d="M1 .5h12v10H1z" fill="#f4edc9" stroke="#222" strokeWidth="1.500" /><path d="M3 4h8M3 6h3" stroke="#666" />
          <circle cx="8.500" cy="8.500" r="3.500" fill="#cfe0e6" stroke="#222" /><path d="m11 11.500 4 4" stroke="#c89020" strokeWidth="2.500" />
        </svg>
        <div className="mt-[20px] w-[160px] border-b border-l-2 border-t-2 border-[#4f6e6c] text-[16px] text-[#0000b0]">
          <div className="flex h-[29px] items-center bg-[#b8cccc] pl-[3px] pt-[3px] font-bold"><span className="border-b-2 border-[#0000b0] leading-[17px]">名称</span></div>
          {["3654", "bea", "ca", "web"].map((t, i) => (
            <div key={t} className={`flex h-[29px] items-center border-t-2 border-[#4f6e6c] pl-[4px] underline ${i % 2 ? "bg-[#e8e8e8]" : "bg-white"}`}>{t}</div>
          ))}
        </div>
      </section>
    </main>
  );
}

export default function App() {
  return (
    <div className="relative flex h-[1049px] w-[1920px] flex-col overflow-hidden border-[3px] border-[#fffff2] bg-white font-['Open_Sans','Noto_Sans_CJK_SC',sans-serif]">
      <header className="flex h-[94px] shrink-0 flex-col bg-linear-to-b from-[#eff5fc] from-30% to-[#d9e8f8] to-70%">
        <TabStrip />
        <NavBar />
        <Bookmarks />
      </header>
      <div className="flex min-h-0 flex-1 font-['Liberation_Sans','Noto_Sans_CJK_SC',sans-serif]">
        <Sidebar />
        <div className="w-[2px] bg-[#e6e6e6]" />
        <Main />
      </div>
      <div className="absolute -left-[3px] -top-[3px]">
        <FileManager />
      </div>
      <div className="absolute bottom-[11px] right-[6px] font-['Open_Sans',sans-serif] text-[24px] leading-[32px] tracking-[0.15px] text-[#444]">www.wooyun.org</div>
    </div>
  );
}
